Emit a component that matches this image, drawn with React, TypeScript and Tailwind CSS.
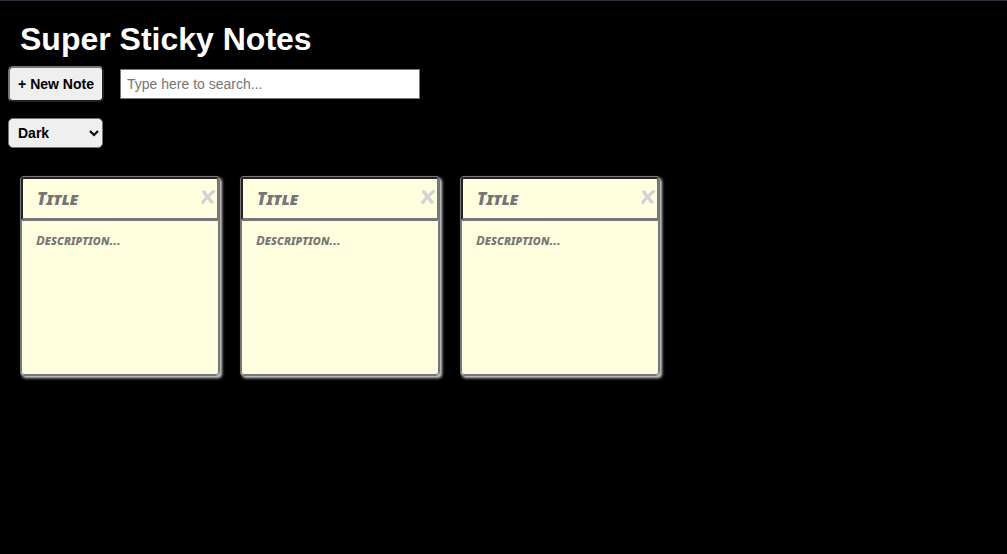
import { useState } from "react";

type Note = { id: number; title: string; description: string };

const initialNotes: Note[] = [
  { id: 1, title: "", description: "" },
  { id: 2, title: "", description: "" },
  { id: 3, title: "", description: "" },
];

function Header({ onAdd }: { onAdd: () => void }) {
  return (
    <header className="pt-5">
      <h1 className="pl-5 text-[32px] leading-9 font-bold">Super Sticky Notes</h1>
      <div className="mt-[9px] flex items-center gap-4 pl-2">
        <button
          onClick={onAdd}
          className="h-9 w-24 rounded-[5px] border-2 border-t-[#767676] border-r-[#212121] border-b-[#212121] border-l-[#767676] bg-[#efefef] text-sm font-bold whitespace-nowrap text-black"
        >
          + New Note
        </button>
        <input
          type="text"
          aria-label="Search notes"
          placeholder="Type here to search..."
          className="h-[30px] w-[300px] border border-[#767676] bg-white px-1.5 text-sm text-black placeholder:text-[#757575]"
        />
      </div>
      <div className="mt-4 pl-2">
        <select
          aria-label="Theme"
          defaultValue="Dark"
          className="block h-[30px] w-[95px] rounded-[5px] border border-[#767676] bg-[#efefef] pl-[5px] pr-1 text-sm font-bold text-black"
        >
          <option>Dark</option>
          <option>Light</option>
        </select>
      </div>
    </header>
  );
}

function NoteCard({ onDelete }: { onDelete: () => void }) {
  return (
    <li className="relative flex h-[200px] w-[200px] flex-col overflow-hidden rounded-[4px] border border-[#767676] bg-[#ffffdf] shadow-[2px_2px_3px_#d3d3d3] [font-family:'Permanent_Marker','Noto_Sans',sans-serif]">
      <input
        type="text"
        aria-label="Title"
        placeholder="Title"
        className="h-[43px] w-full border-2 border-t-[#222222] border-r-[#767676] border-b-[#767676] border-l-[#222222] px-3.5 text-[17px] font-black italic text-black [font-variant-caps:small-caps] placeholder:text-[#757575]"
      />
      <textarea
        aria-label="Description"
        placeholder="Description..."
        className="w-full flex-1 resize-none rounded-b-[3px] border border-[#767676] px-3.5 py-[9px] text-[13px] leading-5 font-bold italic text-black [font-variant-caps:small-caps] placeholder:text-[#757575]"
      />
      <button
        aria-label="Delete note"
        onClick={onDelete}
        className="absolute top-[11px] right-[3px] text-[#d3d3d3]"
      >
        <svg viewBox="0 0 16 18" className="h-[18px] w-4" fill="currentColor">
          <path d="M3.1 2.2 L5.2 2.4 L7.8 6.4 L12.6 2.1 L14.5 2 L15.2 3.3 L14.4 4.7 L10 8.8 L12.2 11.8 L13.7 13.2 L13.3 15.2 L11.4 15.8 L9.8 14.2 L7.5 11.2 L5.2 13.7 L4.2 15.8 L2.2 16.3 L1 15.1 L1.7 13.1 L5.3 9 L2.6 5.3 L2 3.6 Z" />
        </svg>
      </button>
    </li>
  );
}

export default function App() {
  const [notes, setNotes] = useState(initialNotes);
  return (
    <div className="min-h-screen border-t border-[#2c303d] bg-black text-white [font-family:'Liberation_Sans',Arial,sans-serif]">
      <Header
        onAdd={() => setNotes([{ id: Date.now(), title: "", description: "" }, ...notes])}
      />
      <ul className="mt-7 flex flex-wrap gap-5 px-5">
        {notes.map((note) => (
          <NoteCard key={note.id} onDelete={() => setNotes(notes.filter((n) => n.id !== note.id))} />
        ))}
      </ul>
    </div>
  );
}
